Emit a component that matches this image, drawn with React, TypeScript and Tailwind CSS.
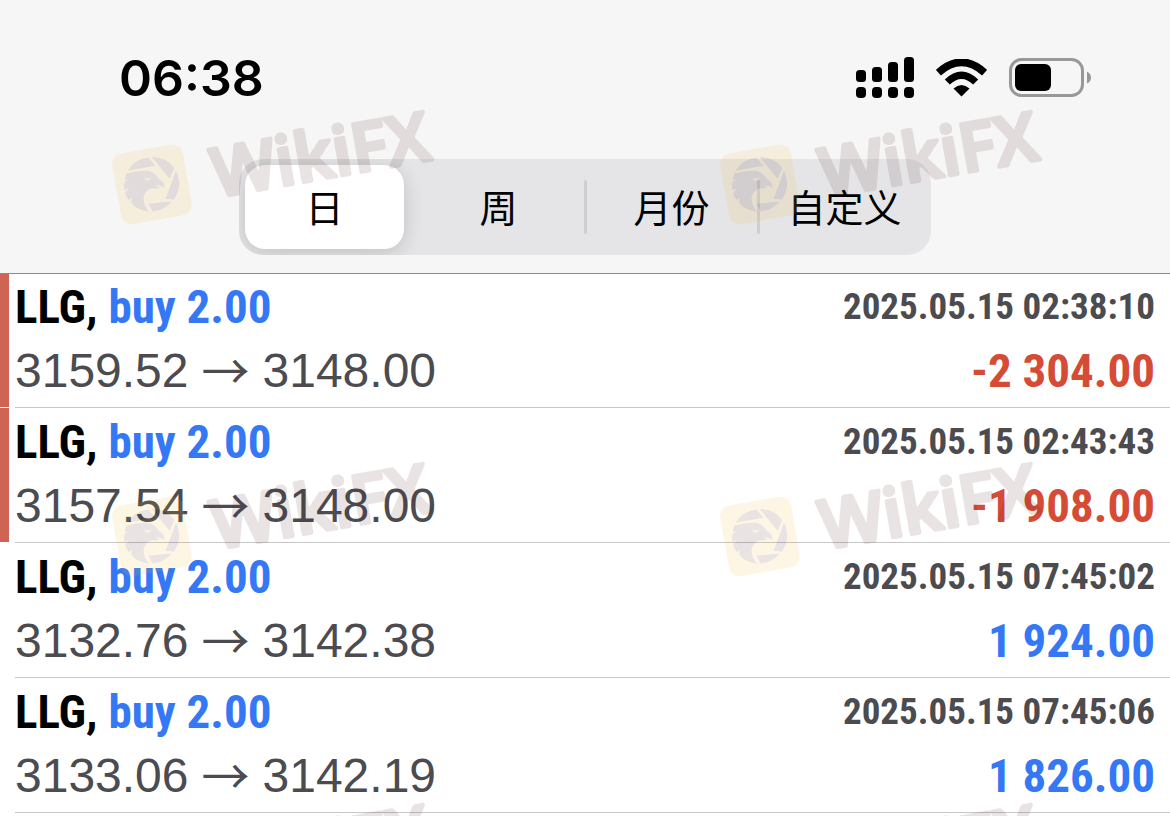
import React, { useState } from 'react'

interface Deal {
  symbol: string
  action: string
  open: string
  close: string
  time: string
  profit: string
  stopped: boolean
}

const deals: Deal[] = [
  { symbol: 'LLG', action: 'buy 2.00', open: '3159.52', close: '3148.00', time: '2025.05.15 02:38:10', profit: '-2 304.00', stopped: true },
  { symbol: 'LLG', action: 'buy 2.00', open: '3157.54', close: '3148.00', time: '2025.05.15 02:43:43', profit: '-1 908.00', stopped: true },
  { symbol: 'LLG', action: 'buy 2.00', open: '3132.76', close: '3142.38', time: '2025.05.15 07:45:02', profit: '1 924.00', stopped: false },
  { symbol: 'LLG', action: 'buy 2.00', open: '3133.06', close: '3142.19', time: '2025.05.15 07:45:06', profit: '1 826.00', stopped: false },
]

const periods = ['日', '周', '月份', '自定义']

export default function App() {
  return (
    <div className="relative min-h-screen overflow-hidden bg-white font-['Liberation_Sans','Noto_Sans_CJK_SC',sans-serif]">
      <header className="relative bg-[#f6f6f6] pb-[18px] shadow-[0_1px_0_#8a8a8c]">
        <StatusBar />
        <PeriodTabs />
      </header>
      <ul>
        {deals.map((deal) => (
          <DealRow key={deal.time} deal={deal} />
        ))}
      </ul>
      <Watermarks />
    </div>
  )
}

function StatusBar() {
  return (
    <div className="flex h-[159px] items-start justify-between pl-[119px] pr-[79px] pt-12">
      <time className="font-['Inter',sans-serif] text-[50px] font-semibold leading-[60px]">06:38</time>
      <div className="flex h-[60px] items-center gap-[22px]">
        {/* 双卡信号 */}
        <svg width="58" height="42" viewBox="0 0 58 42" role="img" aria-label="signal">
          <rect x="0" y="13" width="10" height="12" rx="3.5" />
          <rect x="16" y="10" width="10" height="15" rx="3.5" />
          <rect x="32" y="5" width="10" height="20" rx="3.5" />
          <rect x="48" y="0" width="10" height="25" rx="3.5" />
          <rect x="0" y="30" width="10" height="11" rx="4" />
          <rect x="16" y="30" width="10" height="11" rx="4" />
          <rect x="32" y="30" width="10" height="11" rx="4" />
          <rect x="48" y="30" width="10" height="11" rx="4" />
        </svg>
        <svg width="51" height="38" viewBox="0 0 51 38" role="img" aria-label="wifi">
          <path d="M25.5 37.5 L17.5 29.6 Q25.5 22.4 33.5 29.6 Z" />
          <path d="M11.3 23 Q25.5 9.5 39.7 23" fill="none" stroke="#000" strokeWidth="7.2" />
          <path d="M2.4 13.6 Q25.5 -7 48.6 13.6" fill="none" stroke="#000" strokeWidth="7.6" />
        </svg>
        <svg width="82" height="40" viewBox="0 0 82 40" role="img" aria-label="battery">
          <rect x="1.5" y="1.5" width="72" height="36" rx="11" fill="none" stroke="#989898" strokeWidth="3" />
          <rect x="6" y="6" width="36" height="27" rx="6" />
          <path d="M78 13.5 Q82 15.5 82 19.5 Q82 23.5 78 25.5 Z" fill="#989898" />
        </svg>
      </div>
    </div>
  )
}

function PeriodTabs() {
  const [active, setActive] = useState('日')

  return (
    <div className="mx-auto grid h-24 w-full max-w-[692px] grid-cols-4 overflow-hidden rounded-[24px] bg-[#e5e5e7]">
      {periods.map((period, i) => {
        const selected = period === active
        return (
          <div key={period} className="flex items-center">
            <button
              type="button"
              aria-pressed={selected}
              onClick={() => setActive(period)}
              className={`h-[84px] flex-1 rounded-[20px] pt-1 text-[38px] leading-none text-black ${
                selected ? 'ml-[6px] mr-2 bg-white shadow-[0_4px_20px_rgba(0,0,0,0.16)]' : ''
              }`}
            >
              {period}
            </button>
            {i > 0 && i < 3 && <span className="-ml-px -mr-[2px] h-[54px] w-[3px] rounded-full bg-[#cfcfd2]" />}
          </div>
        )
      })}
    </div>
  )
}

function DealRow({ deal }: { deal: Deal }) {
  const loss = deal.profit.startsWith('-')

  return (
    <li className="flex">
      <div className={`mb-px w-[9px] ${deal.stopped ? 'bg-[#cf6454]' : ''}`} />
      <div className="ml-[6px] flex-1 border-b border-[#c6c6c8] pb-1 pr-[15px] pt-[2px]">
        <div className="flex h-16 items-center justify-between font-['Roboto_Condensed',sans-serif] font-bold">
          <span className="text-[47px] leading-[64px] text-black">
            {deal.symbol}, <span className="text-[#3478f6]">{deal.action}</span>
          </span>
          <time className="text-[37px] leading-[64px] text-[#4b4b50]">{deal.time}</time>
        </div>
        <div className="flex h-16 items-center justify-between">
          <span className="flex text-[48px] leading-[64px] text-[#4b4b50]">
            {deal.open}
            <span className="mx-[13px] font-['Noto_Sans_CJK_SC',sans-serif] leading-[58px]">→</span>
            {deal.close}
          </span>
          <span
            className={`font-['Roboto_Condensed',sans-serif] text-[47px] font-bold leading-[64px] ${
              loss ? 'text-[#d54b36]' : 'text-[#3478f6]'
            }`}
          >
            {deal.profit}
          </span>
        </div>
      </div>
    </li>
  )
}

function Watermarks() {
  return (
    <div
      aria-hidden="true"
      className="pointer-events-none absolute inset-0 grid grid-cols-[repeat(2,608px)] grid-rows-[352px_341px_352px] overflow-hidden pl-[114px] pt-[126px]"
    >
      {[0, 1, 2, 3, 4, 5].map((n) => (
        <div key={n} className="flex h-[72px] w-[330px] -rotate-10 items-center gap-[22px] opacity-[0.12]">
          <EagleLogo />
          <svg className="shrink-0 overflow-visible" width="236" height="72" viewBox="0 0 236 72">
            <text
              x="3"
              y="60"
              className="font-['Open_Sans',sans-serif] text-[68px] font-semibold"
              fill="#502820"
              stroke="#502820"
              strokeWidth="4"
              strokeLinejoin="round"
            >
              WikiFX
            </text>
          </svg>
        </div>
      ))}
    </div>
  )
}

function EagleLogo() {
  return (
    <svg className="shrink-0" width="72" height="72" viewBox="0 0 216 216">
      <rect width="216" height="216" rx="34" fill="#f3b828" />
      <g transform="rotate(10 108 108) translate(-49 -55)" fill="#502820">
        {/* 光圈 */}
        <path d="M84 122 A82 82 0 0 1 146 82 L168 107 Z" />
        <path d="M156 81 A82 82 0 0 1 224 114 L210 146 Z" />
        <path d="M229 122 A82 82 0 0 1 223 208 L198 206 Z" />
        <path d="M146 221 L216 214 A82 82 0 0 1 160 244 Z" />
        {/* 鹰头 */}
        <path d="M80 131 Q112 120 146 122 Q168 127 177 147 Q194 152 194 174 Q184 165 170 166 Q173 170 181 172 Q166 177 153 175 Q131 186 132 208 Q134 229 148 244 Q108 241 94 216 L97 204 L88 210 Q78 200 77 188 L90 172 L75 181 Q72 166 75 156 L88 146 L76 150 Q77 139 80 131 Z" />
        <path d="M133 143 Q143 149 154 141 Q151 153 141 151 Q135 149 133 143 Z" fill="#f3b828" />
      </g>
    </svg>
  )
}
